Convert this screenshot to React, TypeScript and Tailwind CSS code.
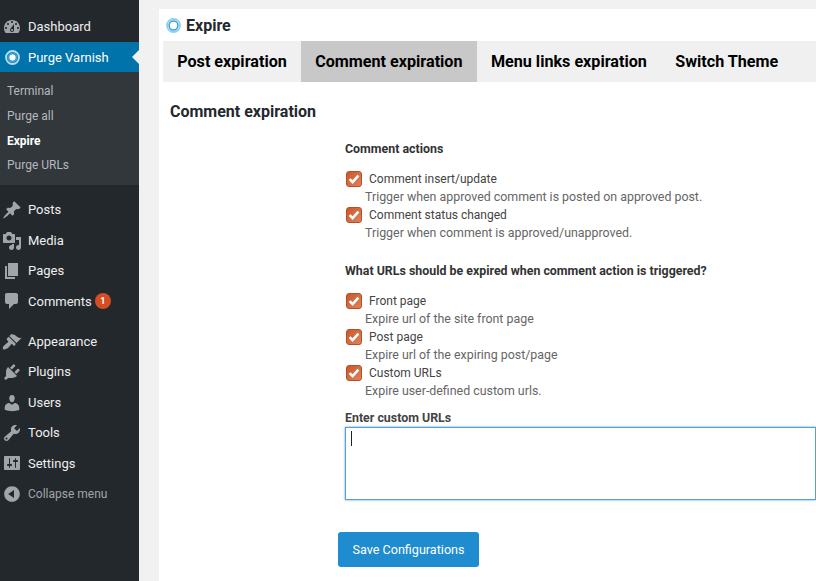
const font = "font-['Roboto','Noto_Sans',sans-serif]";

const icons: Record<string, string> = {
  dashboard:
    "M3.76 16h12.48c1.1-1.37 1.76-3.11 1.76-5 0-4.42-3.58-8-8-8s-8 3.58-8 8c0 1.89.66 3.63 1.76 5zM10 4c.55 0 1 .45 1 1s-.45 1-1 1-1-.45-1-1 .45-1 1-1zM6 6c.55 0 1 .45 1 1s-.45 1-1 1-1-.45-1-1 .45-1 1-1zm8 0c.55 0 1 .45 1 1s-.45 1-1 1-1-.45-1-1 .45-1 1-1zm-5.37 5.55L12 7v6c0 1.1-.9 2-2 2s-2-.9-2-2c0-.57.24-1.08.63-1.45zM4 10c.55 0 1 .45 1 1s-.45 1-1 1-1-.45-1-1 .45-1 1-1zm12 0c.55 0 1 .45 1 1s-.45 1-1 1-1-.45-1-1 .45-1 1-1zm-5 3c0-.55-.45-1-1-1s-1 .45-1 1 .45 1 1 1 1-.45 1-1z",
  posts:
    "M10.44 3.02l1.82-1.82 6.36 6.35-1.83 1.82c-1.05-.68-2.48-.57-3.41.36l-.75.75c-.92.93-1.04 2.35-.35 3.41l-1.83 1.82-2.41-2.41-2.8 2.79c-.42.42-3.38 2.71-3.8 2.29s1.86-3.39 2.28-3.81l2.79-2.79L4.1 9.36l1.83-1.82c1.05.69 2.48.57 3.4-.36l.75-.75c.93-.92 1.05-2.35.36-3.41z",
  media:
    "M13 11V4c0-.55-.45-1-1-1h-1.67L9 1H5L3.67 3H2c-.55 0-1 .45-1 1v7c0 .55.45 1 1 1h10c.55 0 1-.45 1-1zM7 4.5c1.38 0 2.5 1.12 2.5 2.5S8.38 9.5 7 9.5 4.5 8.38 4.5 7 5.62 4.5 7 4.5zM14 6h5v10.5c0 1.38-1.12 2.5-2.5 2.5S14 17.88 14 16.5s1.12-2.5 2.5-2.5c.17 0 .34.02.5.05V9h-3V6zm-4 8.05V13h2v3.5c0 1.38-1.12 2.5-2.5 2.5S7 17.88 7 16.5 8.12 14 9.5 14c.17 0 .34.02.5.05z",
  pages: "M6 15V2h10v13H6zm-1 1h8v2H3V5h2v11z",
  comments:
    "M5 2h9c1.1 0 2 .9 2 2v7c0 1.1-.9 2-2 2h-2l-5 5v-5H5c-1.1 0-2-.9-2-2V4c0-1.1.9-2 2-2z",
  appearance:
    "M14.48 11.06L7.41 3.99l1.5-1.5c.5-.56 2.3-.47 3.51.32 1.21.8 1.43 1.28 2.91 2.1 1.18.64 2.45 1.26 4.45.85zm-.71.71L6.7 4.7 4.93 6.47c-.39.39-.39 1.02 0 1.41l1.06 1.06c.39.39.39 1.03 0 1.42-.6.6-1.43 1.11-2.21 1.69-.35.26-.7.53-1.01.84C1.43 13.23.28 16.27 1.2 17.19c.92.92 3.96-.23 5.3-1.57.31-.31.58-.66.85-1.02.57-.78 1.08-1.61 1.69-2.21.39-.39 1.02-.39 1.41 0l1.06 1.06c.39.39 1.02.39 1.41 0z",
  plugins:
    "M13.11 4.36L9.87 7.6 8 5.73l3.24-3.24c.35-.34 1.05-.2 1.56.32.52.51.66 1.21.31 1.55zm-8 1.77l.91-1.12 9.01 9.01-1.19.84c-.71.71-2.63 1.16-3.82 1.16H6.14L4.9 17.26c-.59.59-1.54.59-2.12 0-.59-.58-.59-1.53 0-2.12l1.24-1.24v-3.88c0-1.13.4-3.19 1.09-3.89zm7.26 3.97l3.24-3.24c.34-.35 1.04-.21 1.55.31.52.51.66 1.21.31 1.55l-3.24 3.25z",
  users:
    "M10 9.25c-2.27 0-2.73-3.44-2.73-3.44C7 4.02 7.82 2 9.97 2c2.16 0 2.98 2.02 2.71 3.81 0 0-.41 3.44-2.68 3.44zm0 2.57L12.72 10c2.39 0 4.52 2.33 4.52 4.53v2.49s-3.65 1.13-7.24 1.13c-3.65 0-7.24-1.13-7.24-1.13v-2.49c0-2.25 1.94-4.48 4.47-4.48z",
  tools:
    "M16.68 9.77c-1.34 1.34-3.3 1.67-4.95.99l-5.41 6.52c-.99.99-2.59.99-3.58 0s-.99-2.59 0-3.57l6.52-5.42c-.68-1.65-.35-3.61.99-4.95 1.28-1.28 3.12-1.62 4.72-1.06l-2.89 2.89 2.82 2.82 2.86-2.87c.53 1.58.18 3.39-1.08 4.65zM3.81 16.21c.4.39 1.04.39 1.43 0 .4-.4.4-1.04 0-1.43-.39-.4-1.03-.4-1.43 0-.39.39-.39 1.03 0 1.43z",
  settings:
    "M18 16V4c0-.55-.45-1-1-1H3c-.55 0-1 .45-1 1v12c0 .55.45 1 1 1h14c.55 0 1-.45 1-1zM8 11h1c.55 0 1 .45 1 1s-.45 1-1 1H8v1.5c0 .28-.22.5-.5.5s-.5-.22-.5-.5V13H6c-.55 0-1-.45-1-1s.45-1 1-1h1V5.5c0-.28.22-.5.5-.5s.5.22.5.5V11zm5-2h-1c-.55 0-1-.45-1-1s.45-1 1-1h1V5.5c0-.28.22-.5.5-.5s.5.22.5.5V7h1c.55 0 1 .45 1 1s-.45 1-1 1h-1v5.5c0 .28-.22.5-.5.5s-.5-.22-.5-.5V9z",
  collapse:
    "M10 2.16c4.33 0 7.84 3.51 7.84 7.84s-3.51 7.84-7.84 7.84S2.16 14.33 2.16 10 5.71 2.16 10 2.16zm2 11.72V6.12L6.18 9.97z",
};

const DashIcon = ({ name }: { name: string }) => (
  <svg viewBox="0 0 20 20" className="w-5 h-5 fill-[#a0a5aa] shrink-0">
    <path d={icons[name]} />
  </svg>
);

const VarnishIcon = ({ ring, mid, core }: { ring: string; mid: string; core: string }) => (
  <svg viewBox="0 0 16 16" className="w-[15px] h-[15px] shrink-0">
    <circle cx="8" cy="8" r="6.9" fill="none" stroke={ring} strokeWidth="2" />
    <circle cx="8" cy="8" r="4.7" fill="none" stroke={mid} strokeWidth="1.6" />
    <circle cx="8" cy="8" r="3.4" fill={core} />
  </svg>
);

const MenuRow = ({ icon, label, badge }: { icon: string; label: string; badge?: string }) => (
  <div className="flex items-center h-[30.4px] pl-[2px] text-[13px] text-[#eeeeee]">
    <DashIcon name={icon} />
    <span className="ml-[6px]">{label}</span>
    {badge && (
      <span className="ml-[3px] w-[16px] h-[16px] rounded-full bg-[#d54e21] text-white text-[9px] font-bold flex items-center justify-center">
        {badge}
      </span>
    )}
  </div>
);

const Sidebar = () => (
  <aside className="w-[139px] shrink-0 bg-[#23282d] pt-[12px]">
    <MenuRow icon="dashboard" label="Dashboard" />
    <div className="relative flex items-center h-[30px] -mt-[0.4px] pl-[5px] bg-[#0073aa] text-white text-[13px]">
      <VarnishIcon ring="#b5dcf2" mid="#3fa3dc" core="#ffffff" />
      <span className="ml-[8px] pt-[1px]">Purge Varnish</span>
      <span className="absolute right-0 top-[8px] border-y-[7px] border-y-transparent border-r-[7px] border-r-[#f1f1f1]" />
    </div>
    <div className="bg-[#32373c] h-[113px] pt-[7px] pl-[7px] text-[12px] text-[#b4b9be] mb-[10px]">
      <div className="h-[24.7px] flex items-center">Terminal</div>
      <div className="h-[24.7px] flex items-center">Purge all</div>
      <div className="h-[24.7px] flex items-center font-bold text-white">Expire</div>
      <div className="h-[24.7px] flex items-center">Purge URLs</div>
    </div>
    <MenuRow icon="posts" label="Posts" />
    <MenuRow icon="media" label="Media" />
    <MenuRow icon="pages" label="Pages" />
    <MenuRow icon="comments" label="Comments" badge="1" />
    <div className="h-[10px]" />
    <MenuRow icon="appearance" label="Appearance" />
    <MenuRow icon="plugins" label="Plugins" />
    <MenuRow icon="users" label="Users" />
    <MenuRow icon="tools" label="Tools" />
    <MenuRow icon="settings" label="Settings" />
    <div className="flex items-center h-[30px] pl-[2px] text-[12px] text-[#a0a5aa]">
      <DashIcon name="collapse" />
      <span className="ml-[6px]">Collapse menu</span>
    </div>
  </aside>
);

const CheckRow = ({ label, help }: { label: string; help: string }) => (
  <div>
    <div className="flex items-center h-[18px] text-[12px] text-[#444444]">
      <span className="w-[16px] h-[16px] rounded-[3px] bg-linear-to-br from-[#c9572c] to-[#e08259] border border-[#b84e26] flex items-center justify-center shrink-0 ml-[1px]">
        <svg viewBox="0 0 14 14" className="w-[14px] h-[14px] shrink-0">
          <path d="M2.6 7.2l3 3 5.8-6.6" fill="none" stroke="#ffffff" strokeWidth="2.5" />
        </svg>
      </span>
      <span className="ml-[7px]">{label}</span>
    </div>
    <p className="pl-[20px] h-[18px] leading-[17px] text-[12.4px] text-[#666666]">{help}</p>
  </div>
);

const tabs = ["Post expiration", "Comment expiration", "Menu links expiration", "Switch Theme"];

export default function App() {
  return (
    <div className={`${font} flex w-[816px] h-[581px] overflow-hidden bg-[#f1f1f1]`}>
      <Sidebar />
      <main className="flex-1 min-w-0 pt-[9px] pl-[20px]">
        <div className="bg-white h-full">
          <div className="flex items-center h-[32px] pl-[7px] pt-[1px]">
            <VarnishIcon ring="#8fd0f0" mid="#3aa0da" core="#ffffff" />
            <h1 className="ml-[5px] text-[16px] font-bold text-[#23282d]">Expire</h1>
          </div>
          <nav className="ml-[4px] flex h-[41px] bg-[#f0f0f0] text-[16.15px] font-bold text-black">
            {tabs.map((tab, i) => (
              <div
                key={tab}
                className={`flex items-center pt-[2px] px-[14.2px] ${i === 1 ? "bg-[#c8c8c8]" : ""}`}
              >
                {tab}
              </div>
            ))}
          </nav>
          <h2 className="ml-[11px] mt-[19px] text-[16px] font-bold leading-[22px] text-[#23282d]">
            Comment expiration
          </h2>
          <div className="pl-[186px] mt-[17px]">
            <h3 className="text-[12.4px] font-bold text-[#333333] leading-[18px]">Comment actions</h3>
            <div className="mt-[12px] flex flex-col">
              <CheckRow label="Comment insert/update" help="Trigger when approved comment is posted on approved post." />
              <CheckRow label="Comment status changed" help="Trigger when comment is approved/unapproved." />
            </div>
            <h3 className="mt-[20px] text-[12.4px] font-bold text-[#333333] leading-[18px]">
              What URLs should be expired when comment action is triggered?
            </h3>
            <div className="mt-[12px] flex flex-col">
              <CheckRow label="Front page" help="Expire url of the site front page" />
              <CheckRow label="Post page" help="Expire url of the expiring post/page" />
              <CheckRow label="Custom URLs" help="Expire user-defined custom urls." />
            </div>
            <label className="block mt-[9px] text-[12.4px] font-bold text-[#444444] leading-[18px]">Enter custom URLs</label>
            <div className="h-[73px] border border-[#5b9dd9] shadow-[0_0_2px_rgba(30,140,190,0.8)] pl-[5px] pt-[3px]">
              <span className="block w-px h-[15px] bg-[#222222]" />
            </div>
            <button className="mt-[32px] -ml-[7px] w-[141px] h-[35px] pt-[1px] rounded-[3px] bg-[#1e8cce] text-white text-[12.6px]">
              Save Configurations
            </button>
          </div>
        </div>
      </main>
    </div>
  );
}
